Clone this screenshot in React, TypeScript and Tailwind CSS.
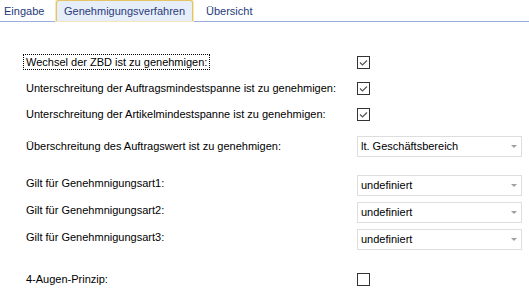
const font = { fontFamily: '"Liberation Sans", Arial, sans-serif' };

const Check = ({ checked }: { checked: boolean }) => (
  <div className="w-[13px] h-[13px] border border-[#333333] bg-white flex items-center justify-center">
    {checked && (
      <svg width="11" height="11" viewBox="0 0 11 11">
        <path d="M2 5.5 L4.5 8 L9 3.5" fill="none" stroke="#555555" strokeWidth="1.2" />
      </svg>
    )}
  </div>
);

const Dropdown = ({ value }: { value: string }) => (
  <div className="w-[165px] h-[21px] border border-[#dedede] bg-white flex items-center justify-between pl-[3px] pr-[4px]">
    <span className="text-[11px] text-black">{value}</span>
    <svg width="6" height="4" viewBox="0 0 6 4">
      <path d="M0 0 L6 0 L3 3 Z" fill="#a0a0a0" />
    </svg>
  </div>
);

export default function App() {
  return (
    <div className="w-[529px] h-[292px] bg-white overflow-hidden text-[11px] text-black whitespace-nowrap" style={font}>
      {/* Tabs */}
      <div className="h-[22px] flex items-end border-b border-[#9ab0dc]">
        <div className="w-[56px] h-[20px] pl-[4px] flex items-center text-[#1e3b7a]">Eingabe</div>
        <div className="w-[137px] h-[21px] flex items-center justify-center rounded-t-[3px] border border-b-0 border-[#e6c364] bg-[#e6eef9] text-[#2b3b7c] shadow-[0_0_0_1px_#f6e6b8]">
          Genehmigungsverfahren
        </div>
        <div className="h-[20px] pl-[13px] flex items-center text-[#1e3b7a]">Übersicht</div>
      </div>

      {/* Form */}
      <div className="flex flex-col pt-[28px]">
        <div className="h-[25px] flex items-center">
          <div className="w-[357px] pl-[23px]">
            <span className="border border-dotted border-black px-[2px] py-[1px]">
              Wechsel der ZBD ist zu genehmigen:
            </span>
          </div>
          <Check checked />
        </div>
        <div className="h-[26px] flex items-center">
          <div className="w-[357px] pl-[26px]">Unterschreitung der Auftragsmindestspanne ist zu genehmigen:</div>
          <Check checked />
        </div>
        <div className="h-[26px] flex items-center">
          <div className="w-[357px] pl-[26px]">Unterschreitung der Artikelmindestspanne ist zu genehmigen:</div>
          <Check checked />
        </div>

        <div className="mt-[9px] h-[21px] flex items-center">
          <div className="w-[357px] pl-[26px]">Überschreitung des Auftragswert ist zu genehmigen:</div>
          <Dropdown value="lt. Geschäftsbereich" />
        </div>

        <div className="mt-[18px] h-[21px] flex items-center">
          <div className="w-[357px] pl-[26px] pb-[5px]">Gilt für Genehmnigungsart1:</div>
          <Dropdown value="undefiniert" />
        </div>
        <div className="mt-[6px] h-[21px] flex items-center">
          <div className="w-[357px] pl-[26px] pb-[4px]">Gilt für Genehmnigungsart2:</div>
          <Dropdown value="undefiniert" />
        </div>
        <div className="mt-[6px] h-[21px] flex items-center">
          <div className="w-[357px] pl-[26px] pb-[4px]">Gilt für Genehmnigungsart3:</div>
          <Dropdown value="undefiniert" />
        </div>

        <div className="mt-[17px] h-[25px] flex items-center">
          <div className="w-[357px] pl-[26px]">4-Augen-Prinzip:</div>
          <Check checked={false} />
        </div>
      </div>
    </div>
  );
}
